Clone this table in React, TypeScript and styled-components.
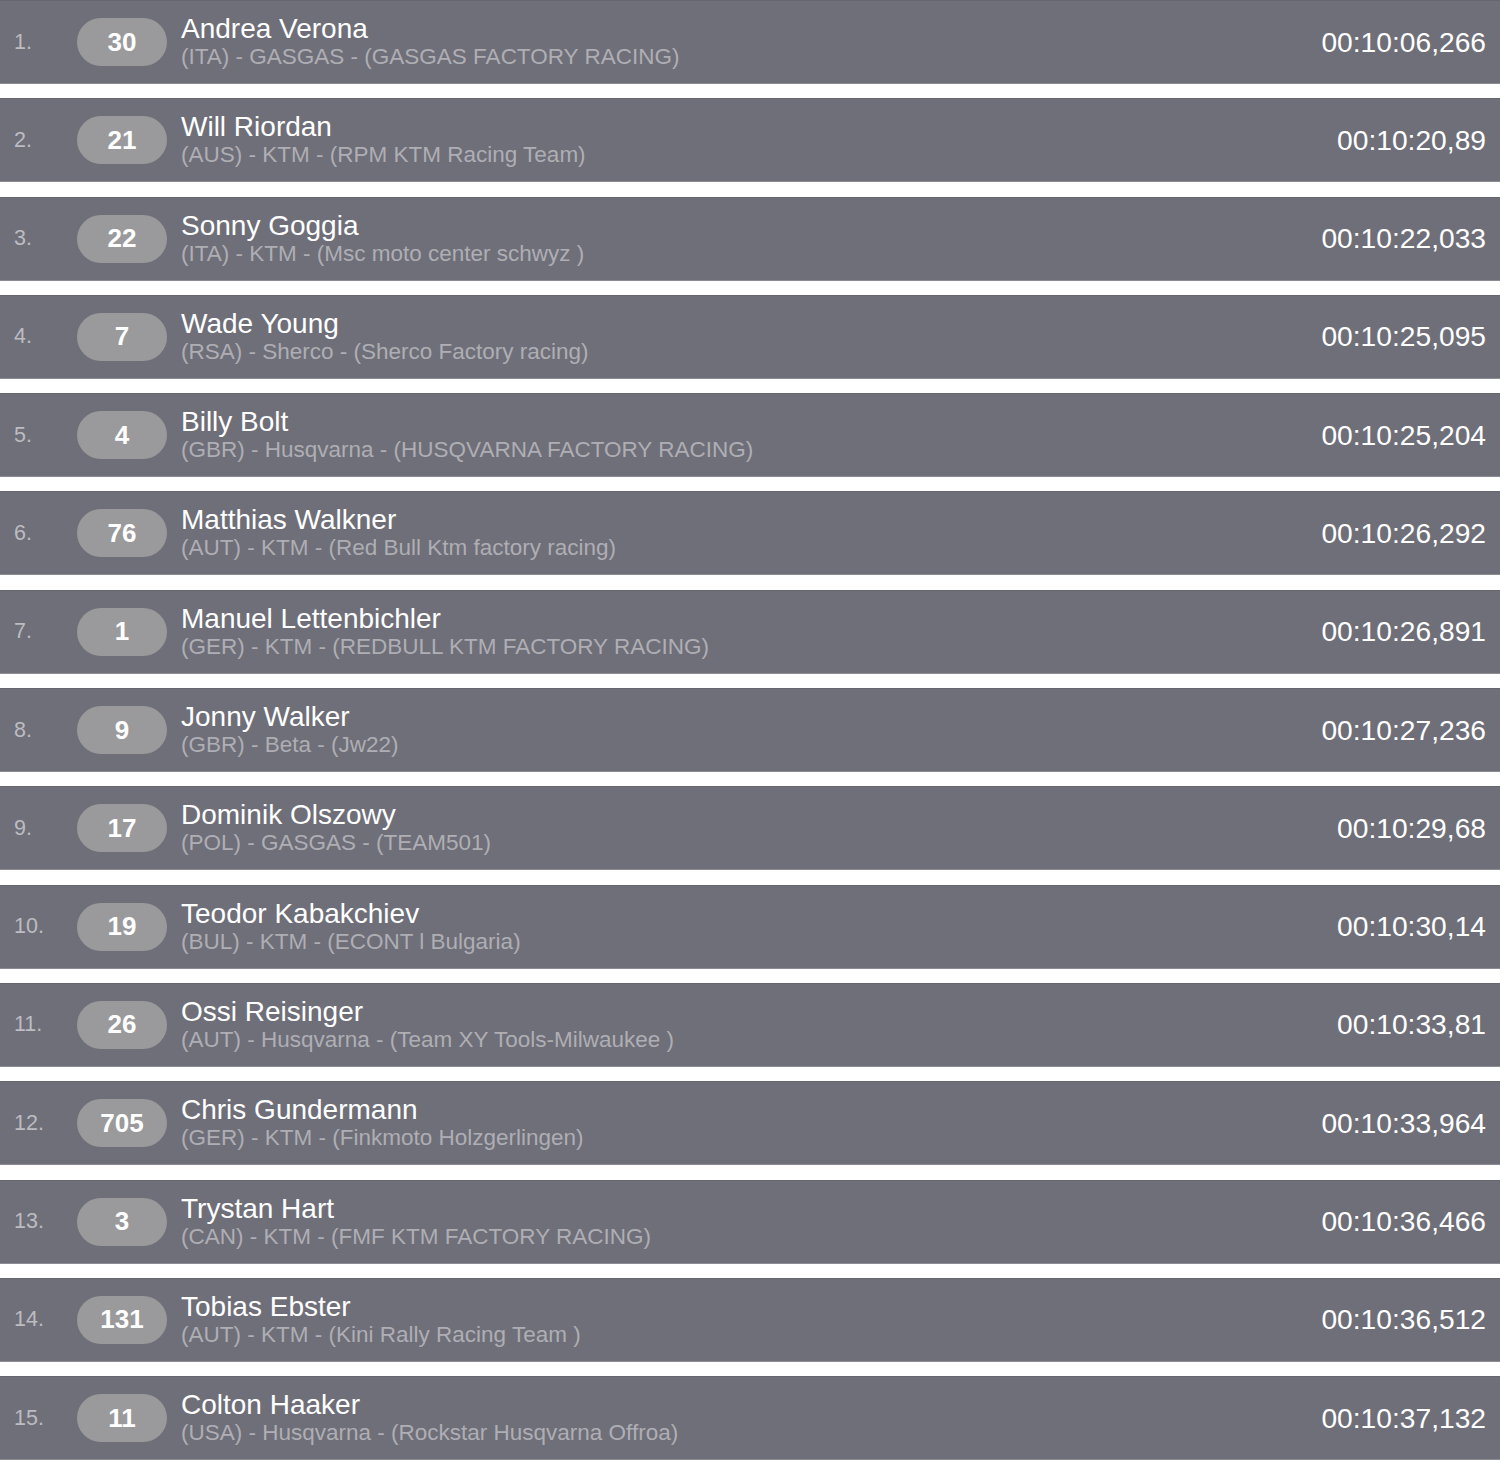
import React from 'react';
import styled, {createGlobalStyle} from 'styled-components';

type Rider = {
  number: string,
  name: string,
  info: string,
  time: string,
};

const riders: Rider[] = [
  {number: '30', name: 'Andrea Verona', info: '(ITA) - GASGAS - (GASGAS FACTORY RACING)', time: '00:10:06,266'},
  {number: '21', name: 'Will Riordan', info: '(AUS) - KTM - (RPM KTM Racing Team)', time: '00:10:20,89'},
  {number: '22', name: 'Sonny Goggia', info: '(ITA) - KTM - (Msc moto center schwyz )', time: '00:10:22,033'},
  {number: '7', name: 'Wade Young', info: '(RSA) - Sherco - (Sherco Factory racing)', time: '00:10:25,095'},
  {number: '4', name: 'Billy Bolt', info: '(GBR) - Husqvarna - (HUSQVARNA FACTORY RACING)', time: '00:10:25,204'},
  {number: '76', name: 'Matthias Walkner', info: '(AUT) - KTM - (Red Bull Ktm factory racing)', time: '00:10:26,292'},
  {number: '1', name: 'Manuel Lettenbichler', info: '(GER) - KTM - (REDBULL KTM FACTORY RACING)', time: '00:10:26,891'},
  {number: '9', name: 'Jonny Walker', info: '(GBR) - Beta - (Jw22)', time: '00:10:27,236'},
  {number: '17', name: 'Dominik Olszowy', info: '(POL) - GASGAS - (TEAM501)', time: '00:10:29,68'},
  {number: '19', name: 'Teodor Kabakchiev', info: '(BUL) - KTM - (ECONT l Bulgaria)', time: '00:10:30,14'},
  {number: '26', name: 'Ossi Reisinger', info: '(AUT) - Husqvarna - (Team XY Tools-Milwaukee )', time: '00:10:33,81'},
  {number: '705', name: 'Chris Gundermann', info: '(GER) - KTM - (Finkmoto Holzgerlingen)', time: '00:10:33,964'},
  {number: '3', name: 'Trystan Hart', info: '(CAN) - KTM - (FMF KTM FACTORY RACING)', time: '00:10:36,466'},
  {number: '131', name: 'Tobias Ebster', info: '(AUT) - KTM - (Kini Rally Racing Team )', time: '00:10:36,512'},
  {number: '11', name: 'Colton Haaker', info: '(USA) - Husqvarna - (Rockstar Husqvarna Offroa)', time: '00:10:37,132'},
];

const GlobalStyle = createGlobalStyle`
  html, body {
    margin: 0;
    padding: 0;
    background: #ffffff;
  }
  body {
    font-family: "Liberation Sans", Arial, Helvetica, sans-serif;
  }
`

const App = () => {
  return (
    <>
      <GlobalStyle/>
      <List>
        {riders.map((r, i) => (
          <Row key={r.number}>
            <Position>{i + 1}.</Position>
            <Badge>{r.number}</Badge>
            <Details>
              <Name>{r.name}</Name>
              <Info>{r.info}</Info>
            </Details>
            <Time>{r.time}</Time>
          </Row>
        ))}
      </List>
    </>
  );
}

const List = styled.div`
  display: flex;
  flex-direction: column;
  gap: 14.3px;
`

const Row = styled.div`
  display: flex;
  align-items: center;
  height: 84px;
  box-sizing: border-box;
  padding: 0 14px;
  background: #6f6f79;
  border-top: 1px solid #66666f;
  border-bottom: 1px solid #8c8c94;
`

const Position = styled.div`
  width: 63px;
  flex-shrink: 0;
  font-size: 21.5px;
  color: #bcbcc2;
`

const Badge = styled.div`
  width: 90px;
  height: 48px;
  flex-shrink: 0;
  border-radius: 24px;
  background: #9a9a9c;
  display: flex;
  align-items: center;
  justify-content: center;
  color: #ffffff;
  font-weight: bold;
  font-size: 26px;
`

const Details = styled.div`
  flex: 1;
  display: flex;
  flex-direction: column;
  margin-left: 14px;
  margin-top: 2px;
`

const Name = styled.div`
  font-size: 28px;
  line-height: 28px;
  color: #ffffff;
`

const Info = styled.div`
  font-size: 22.5px;
  line-height: 28px;
  color: #aeaeb4;
`

const Time = styled.div`
  font-size: 28.2px;
  color: #ffffff;
`

export default App;
